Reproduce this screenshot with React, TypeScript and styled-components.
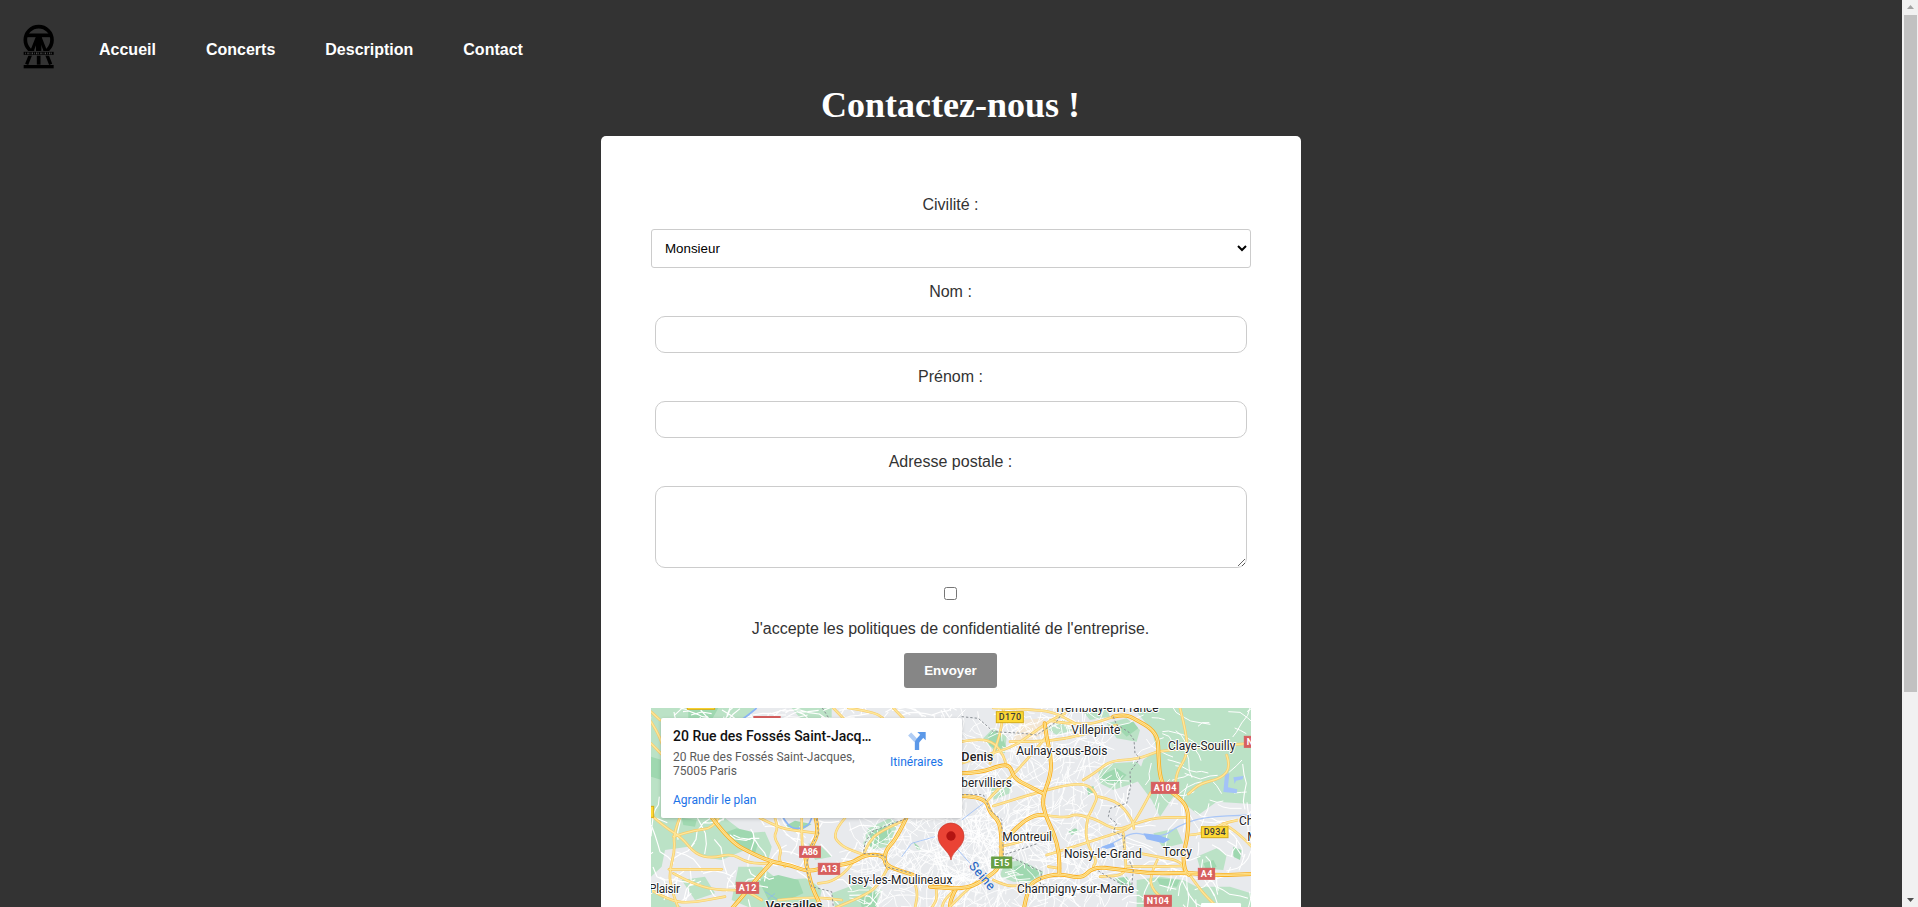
import React from "react";
import styled, { createGlobalStyle } from "styled-components";

const GlobalStyle = createGlobalStyle`
  html, body { margin: 0; padding: 0; height: 100%; overflow: hidden; background: #333; }
  *, *::before, *::after { box-sizing: border-box; }
`;

const sans = `"Liberation Sans", Arial, sans-serif`;

const Window = styled.div`
  display: flex;
  height: 100vh;
  overflow: hidden;
  background: #333;
  font-family: ${sans};
`;

const Page = styled.div`
  flex: 1;
  min-width: 0;
  overflow: hidden;
`;

const Nav = styled.nav`
  display: flex;
  align-items: center;
  height: 84px;
  padding: 16px 0 0 23px;
`;

const Brand = styled.a`
  display: flex;
  width: 38px;
  margin-right: 38px;
  margin-top: -6px;
`;

const Menu = styled.div`
  display: flex;
  gap: 50px;
`;

const MenuLink = styled.a`
  color: #fff;
  font-size: 16px;
  line-height: 18px;
  font-weight: bold;
  text-decoration: none;
`;

const Title = styled.h1`
  margin: 0 1px 0 0;
  height: 52px;
  line-height: 42px;
  font-family: "Liberation Serif", "Times New Roman", serif;
  font-size: 36px;
  color: #fff;
  text-align: center;
`;

const Card = styled.form`
  display: flex;
  flex-direction: column;
  align-items: center;
  width: 700px;
  height: 1000px;
  margin: 0 auto;
  padding: 60px 50px 0;
  background: #fff;
  border-radius: 5px;
  color: #333;
`;

const Label = styled.label`
  flex: none;
  font-size: 16px;
  line-height: 18px;
  margin: 0 1px 15px 0;
`;

const Select = styled.select`
  flex: none;
  width: 600px;
  height: 39px;
  margin-bottom: 15px;
  padding: 10px 10px 10px 9px;
  border: 1px solid #ccc;
  border-radius: 3px;
  background: #fff;
  color: #000;
  font: 13.333px ${sans};
`;

const Input = styled.input`
  flex: none;
  width: 592px;
  height: 37px;
  margin-bottom: 15px;
  border: 1px solid #ccc;
  border-radius: 10px;
  background: #fff;
`;

const TextArea = styled.textarea`
  flex: none;
  width: 592px;
  height: 82px;
  margin-bottom: 19px;
  border: 1px solid #ccc;
  border-radius: 10px;
  background: #fff;
`;

const Checkbox = styled.input`
  flex: none;
  width: 13px;
  height: 13px;
  margin: 0 1px 20px 0;
`;

const Submit = styled.button`
  flex: none;
  width: 93px;
  height: 35px;
  margin: 0 1px 20px 0;
  border: 0;
  border-radius: 3px;
  background: #868686;
  color: #fff;
  font: bold 13.333px ${sans};
`;

const MapFrame = styled.div`
  position: relative;
  flex: none;
  width: 600px;
  height: 450px;
  overflow: hidden;
  background: #e8eaed;
  font-family: Roboto, sans-serif;
`;

const PlaceCard = styled.div`
  position: absolute;
  top: 10px;
  left: 10px;
  display: flex;
  justify-content: space-between;
  width: 301px;
  height: 100px;
  padding: 9px 19px 0 12px;
  border-radius: 2px;
  background: #fff;
  box-shadow: 0 1px 4px -1px rgba(0, 0, 0, 0.3);
`;

const PlaceName = styled.div`
  font-size: 14px;
  line-height: 18px;
  font-weight: 500;
  color: #111;
  margin-bottom: 5px;
  white-space: nowrap;
`;

const PlaceAddress = styled.div`
  width: 200px;
  font-size: 12px;
  line-height: 14px;
  color: #5b5b5b;
`;

const MapLink = styled.a`
  display: block;
  font-size: 12px;
  line-height: 14px;
  color: #1a73e8;
`;

const Larger = styled(MapLink)`
  margin-top: 15px;
`;

const Directions = styled.div`
  display: flex;
  flex-direction: column;
  align-items: center;
  padding-top: 5px;
  gap: 5px;
`;

const ScrollTrack = styled.aside`
  display: flex;
  flex-direction: column;
  align-items: center;
  width: 16px;
  background: #f1f1f1;
`;

const ScrollThumb = styled.div`
  width: 13px;
  height: 677px;
  margin-left: 1px;
  background: #c1c1c1;
`;

const ScrollArrow = styled.svg<{ $end?: boolean }>`
  display: block;
  width: 16px;
  height: 15px;
  margin-top: ${(p) => (p.$end ? "auto" : "0")};
`;

const Logo = () => (
  <svg width="32" height="46" viewBox="1 0 96 138" fill="none" stroke="#000">
    <circle cx="48" cy="48" r="40" strokeWidth="11" />
    <path d="M13 34H83" strokeWidth="11" />
    <path d="M48 34V122" strokeWidth="11" />
    <path d="M45 38L12 121M51 38L84 121" strokeWidth="10" />
    <path d="M40 40L48 30L56 40V84H40Z" fill="#000" stroke="none" />
    <path d="M5 88H91" stroke="#333" strokeWidth="14" />
    <path d="M3 88H93" strokeWidth="9" />
    <path d="M8 88H90" stroke="#4a4a4a" strokeWidth="5" strokeDasharray="2 4 4 3" />
    <path d="M3 128H93" strokeWidth="10" />
  </svg>
);

const seeded = (seed: number) => () => {
  seed = (seed * 16807) % 2147483647;
  return seed / 2147483647;
};

// Short jittered segments that fan out into a street mesh, denser near the centre.
const streets = (seed: number, count: number, x0: number, y0: number, w: number, h: number) => {
  const r = seeded(seed);
  let d = "";
  for (let i = 0; i < count; i++) {
    let x = x0 + r() * w;
    let y = y0 + r() * h;
    let a = r() * Math.PI * 2;
    d += `M${x.toFixed(0)} ${y.toFixed(0)}`;
    const n = 2 + Math.floor(r() * 4);
    for (let k = 0; k < n; k++) {
      a += (r() - 0.5) * 1.1;
      x += Math.cos(a) * (14 + r() * 22);
      y += Math.sin(a) * (14 + r() * 22);
      d += `L${x.toFixed(0)} ${y.toFixed(0)}`;
    }
  }
  return d;
};

type Pt = [number, number];
const smooth = (s: string) => {
  const p = s.split(" ").map((q) => q.split(",").map(Number) as Pt);
  let d = `M${p[0]}`;
  for (let i = 1; i < p.length - 1; i++) {
    const mx = (p[i][0] + p[i + 1][0]) / 2;
    const my = (p[i][1] + p[i + 1][1]) / 2;
    d += `Q${p[i]} ${mx},${my}`;
  }
  return d + `L${p[p.length - 1]}`;
};

const eastMajor = [
  "490,50 525,42 560,60 604,86 624,116 625,160 629,225 642,262 682,288 710,318 716,360 711,420 699,465 704,510 716,524",
  "35,220 95,217 150,196 180,196 192,236 240,260 278,280",
  "284,70 289,110 303,170 303,225 276,295 285,345 312,400 328,460 328,522",
  "35,288 105,290 120,340 150,365 156,440 152,500 110,535 50,568 -60,560",
  "222,625 234,560 265,535 328,520 395,537 430,500 500,507 600,521 715,518 800,526 905,522",
  "165,420 210,370 255,345 285,345",
];
const eastMinor = [
  "35,190 110,165 190,140 240,105 300,62 345,40",
  "130,24 230,28 310,35 370,68 385,74",
  "300,62 400,80 490,50",
  "400,240 440,215 480,182 560,178 622,155",
  "622,155 700,145 770,140 900,130",
  "130,318 250,280 400,243 445,285 430,320 415,350",
  "285,345 345,355 375,342 410,350 440,360 500,392 550,372 620,352 710,352",
  "602,278 575,330 540,385 490,402 420,425 340,450 290,465",
  "690,24 712,110 710,170 680,215 674,270",
  "830,165 842,200 815,235 750,250 715,282",
  "500,75 400,105 290,125 180,125",
  "110,305 140,270 190,225 290,110",
  "570,460 620,470 690,482 702,510",
  "622,480 597,530 610,575 655,605",
  "716,520 750,570 795,615",
  "718,405 760,402 820,370 865,360",
  "820,370 860,395 905,440",
  "445,290 500,300 545,355 552,385",
  "415,350 405,390 415,440 440,480 430,500",
  "520,400 525,460 530,525 450,530",
  "150,440 220,425 270,400 310,405",
  "130,540 170,560 215,555 270,560",
  "35,125 90,115 135,130 160,165 170,200",
  "160,30 155,90 130,160 120,190",
  "0,620 40,580 80,545",
  "530,500 600,500 700,498",
  "330,505 295,500",
];
const westMajor = [
  "202,354 255,425 330,465 385,487 435,495 490,516 545,500 620,490 660,464 715,465 725,500 800,522 870,552 932,568",
  "784,354 755,415 722,450 718,485 730,503",
  "380,487 340,530 300,580 262,624",
  "512,354 522,395 500,440 480,480 490,515 500,560 530,624",
  "932,568 916,600 915,624",
];
const westMinor = [
  "18,345 60,382 110,412 150,462 200,475 260,460 310,490 380,490",
  "104,354 85,400 90,450 72,520 80,570 100,624",
  "72,508 130,508 230,508",
  "220,354 205,385 150,390 85,410",
  "390,354 400,385 385,410 410,450 400,480 420,500",
  "345,354 400,382 440,390 520,400",
  "600,354 560,400 590,440 650,462",
  "715,465 640,460 610,510 560,545 520,550",
  "780,360 700,395 670,430 655,465",
  "85,520 140,550 210,570 300,570 350,600",
  "18,570 70,600 130,610 240,590",
  "730,500 700,560 650,590 570,624",
  "800,522 820,570 810,624",
  "870,552 880,590 860,624",
  "932,568 900,595 890,624",
  "18,65 50,115 60,180",
  "18,130 52,165",
  "400,600 500,590 590,600",
  "565,24 600,60",
  "610,24 690,36 720,60",
  "745,24 780,60",
  "18,35 45,60",
  "470,354 470,440 480,480",
];

const westGreen = [
  "18,24 330,24 300,60 60,60 60,354 240,354 300,400 360,395 380,440 370,480 300,450 230,480 170,470 130,440 60,450 50,500 18,530",
  "18,560 60,590 110,621 18,621",
  "280,500 350,500 400,540 490,535 530,570 520,621 310,621 260,600",
  "670,385 735,354 760,370 730,440 670,450 655,430",
  "490,430 530,440 560,470 510,480",
  "110,540 180,530 210,580 150,600",
  "440,24 560,24 560,60 470,60",
  "560,580 640,550 710,570 690,621 570,621",
];
const westForest = [
  "235,400 275,385 320,395 338,435 330,460 280,440",
  "340,540 400,525 460,540 475,580 430,600 370,600",
  "18,170 50,180 50,240 18,230",
  "675,395 725,370 740,395 715,430 672,440",
  "130,30 220,24 200,60 130,60",
  "420,378 450,362 500,372 455,400",
  "805,425 822,440 828,452 815,446",
  "110,354 155,360 150,380 115,375",
  "640,585 690,575 700,621 650,621",
];
const eastGreen = [
  "550,24 903,24 903,312 800,305 745,345 715,320 670,290 630,350 605,300 560,240 580,180 620,150 605,90",
  "445,215 490,190 560,185 600,230 550,250 490,270 450,250",
  "100,115 130,85 170,110 165,160 130,150",
  "160,490 210,480 280,515 265,550 190,545 150,530",
  "470,70 530,55 570,90 560,125 500,115",
  "560,540 630,530 700,540 740,560 840,560 903,580 903,621 560,621",
  "740,470 800,445 830,465 820,510 750,505",
  "395,30 470,24 480,50 420,60",
  "610,400 680,385 700,430 640,445",
  "290,85 340,60 370,90 320,105",
  "120,265 190,245 180,280 130,300",
];
const eastForest = [
  "115,105 130,92 155,105 168,140 140,150 118,135",
  "455,225 500,205 530,225 505,250 460,245",
  "190,500 235,490 270,520 240,545 200,535",
  "500,80 550,65 565,85 530,110",
  "760,490 790,480 800,500 770,512",
  "620,535 690,540 680,560 630,556",
  "355,395 375,385 390,392 365,405",
  "410,265 430,258 435,275 415,285",
  "495,535 530,530 548,560 520,565",
  "850,440 875,450 870,480 850,470",
];

const Roads = ({ lines, major }: { lines: string[]; major?: boolean }) => (
  <g fill="none" strokeLinecap="round" strokeLinejoin="round">
    {lines.map((l, i) => (
      <path key={`c${i}`} d={smooth(l)} stroke={major ? "#f9ae22" : "#f9cb68"} strokeWidth={major ? 12 : 8} />
    ))}
    {lines.map((l, i) => (
      <path key={`f${i}`} d={smooth(l)} stroke="#fde79a" strokeWidth={major ? 7 : 4} />
    ))}
    {major && lines.map((l, i) => <path key={`m${i}`} d={smooth(l)} stroke="#f9b532" strokeWidth="1.5" />)}
  </g>
);

const Areas = ({ shapes, fill }: { shapes: string[]; fill: string }) => (
  <g fill={fill}>
    {shapes.map((s, i) => (
      <polygon key={i} points={s} />
    ))}
  </g>
);

const Town = ({ x, y, w, size = 36, weight = 400, children }: {
  x: number; y: number; w: number; size?: number; weight?: number; children: string;
}) => (
  <text x={x} y={y} textLength={w} fontSize={size} fontWeight={weight} fill="#202124" stroke="#fff"
    strokeWidth="6" strokeLinejoin="round" paintOrder="stroke">{children}</text>
);

const shieldColors = {
  red: ["#d75f5f", "#d75f5f", "#fff"],
  green: ["#679f45", "#679f45", "#fff"],
  yellow: ["#fdd835", "#d6ac16", "#3c3c3c"],
};

const Shield = ({ x, y, w, tone = "red", children }: {
  x: number; y: number; w: number; tone?: keyof typeof shieldColors; children: string;
}) => {
  const [bg, edge, ink] = shieldColors[tone];
  return (
    <g>
      <rect x={x} y={y} width={w} height="33" fill={bg} stroke={edge} strokeWidth="3" />
      <text x={x + w / 2} y={y + 26} fontSize="27" fontWeight={tone === "yellow" ? 500 : 700} textAnchor="middle"
        fill={ink} textLength={w - 14}>{children}</text>
    </g>
  );
};

const dashes = { fill: "none", stroke: "#8a8f95", strokeWidth: 3, strokeDasharray: "7 6" };

const ParisMap = () => (
  <svg width="600" height="199" viewBox="0 0 1800 597" display="block">
    <rect width="1800" height="597" fill="#e8eaed" />
    <g transform="translate(-18 -24)">
      <Areas shapes={westGreen} fill="#bbe2c6" />
      <Areas shapes={westForest} fill="#9fd8b0" />
    </g>
    <g transform="translate(897 -24)">
      <Areas shapes={eastGreen} fill="#bbe2c6" />
      <Areas shapes={eastForest} fill="#9fd8b0" />
      <polygon points="215,60 280,55 285,100 220,130 180,140" fill="#f3e6d3" />
    </g>
    <g fill="none" stroke="#fff" strokeLinejoin="round">
      <path d={streets(17, 60, 0, 320, 620, 277)} strokeWidth="3.5" />
      <path d={streets(91, 260, 640, 320, 430, 277)} strokeWidth="2.6" />
      <path d={streets(53, 380, 930, 0, 470, 590)} strokeWidth="2.8" />
      <path d={streets(29, 32, 1500, 0, 300, 300)} strokeWidth="3" />
      <path d={streets(37, 60, 1390, 290, 410, 300)} strokeWidth="3.2" />
      <path d={streets(7, 50, 0, 0, 920, 30)} strokeWidth="3.5" />
    </g>
    <g transform="translate(-18 -24)">
      <g fill="none" stroke="#8ab4f8" strokeWidth="5">
        <path d={smooth("415,354 430,378 455,388 490,378 500,354")} />
        <path d={smooth("335,24 310,45 285,62")} />
        <path d="M770,470L800,430L870,410M360,575L400,600M390,580L368,598" strokeWidth="2" />
      </g>
      <Roads lines={westMinor} />
      <Roads lines={westMajor} major />
      <path d="M784 356L730 375L680 395L660 430L655 460L720 468L722 500L800 520M515 356L520 400L488 460L485 510L500 560L560 575L565 621" {...dashes} />
      <path d="M532 24L555 60" {...dashes} />
    </g>
    <g transform="translate(897 -24)">
      <g fill="none" stroke="#a9c6f7" strokeWidth="4">
        <path d={smooth("450,445 490,430 550,395 600,410 650,405 680,380 760,350 905,345")} />
        <path d={smooth("15,440 60,490")} strokeWidth="3" />
        <path d={smooth("35,360 100,310")} strokeWidth="3" />
      </g>
      <path d="M825 222L838 220L834 262L862 268L860 280L820 276ZM850 232L880 228L878 238L858 242L854 252Z" fill="#a3c3f7" />
      <path d="M580 400L625 405L660 418L640 430L590 418ZM455 440L490 428L495 440L470 447Z" fill="#92b8f7" />
      <Roads lines={eastMinor} />
      <Roads lines={eastMajor} major />
      <path d="M35 50L85 55L130 95L220 100L260 105L320 65L345 24M490 50L500 75L535 95L552 120L555 160L570 175L540 215L542 260L530 310L480 325L475 350L500 370L490 395L525 410L520 440L550 510L545 560L500 545L440 510M35 284L100 284L120 330L155 360L160 465L220 445L265 430M160 470L190 475L275 515L270 550L340 580" {...dashes} />
    </g>
    <g transform="translate(-18 -24)">
      <rect x="127" y="0" width="82" height="28" fill="#fdd835" stroke="#d6ac16" strokeWidth="3" />
      <rect x="-20" y="319" width="46" height="33" fill="#fdd835" stroke="#d6ac16" strokeWidth="3" />
      <rect x="325" y="48" width="82" height="33" fill="#d75f5f" />
      <Shield x={464} y={439} w={62}>A86</Shield>
      <Shield x={520} y={490} w={64}>A13</Shield>
      <Shield x={274} y={547} w={67}>A12</Shield>
      <Town x={12} y={579} w={93}>Plaisir</Town>
      <Town x={609} y={552} w={313}>Issy-les-Moulineaux</Town>
      <Town x={362} y={630} w={171} size={39} weight={500}>Versailles</Town>
    </g>
    <g transform="translate(897 -24)">
      <Town x={313} y={35} w={313}>Tremblay-en-France</Town>
      <Town x={364} y={102} w={147}>Villepinte</Town>
      <Town x={199} y={165} w={273}>Aulnay-sous-Bois</Town>
      <Town x={654} y={150} w={202}>Claye-Souilly</Town>
      <Town x={34} y={184} w={96} size={38} weight={500}>Denis</Town>
      <Town x={34} y={261} w={152}>bervilliers</Town>
      <Town x={157} y={423} w={149}>Montreuil</Town>
      <Town x={342} y={474} w={233}>Noisy-le-Grand</Town>
      <Town x={638} y={468} w={88}>Torcy</Town>
      <Town x={201} y={579} w={351}>Champigny-sur-Marne</Town>
      <Town x={867} y={375} w={115}>Chelles</Town>
      <Town x={892} y={423} w={105}>Meaux</Town>
      <text transform="translate(55 499) rotate(49)" fontSize="38" fill="#1760c4" stroke="#e8eaed" strokeWidth="3"
        paintOrder="stroke" textLength="98">Seine</text>
      <Shield x={139} y={35} w={81} tone="yellow">D170</Shield>
      <Shield x={754} y={380} w={80} tone="yellow">D934</Shield>
      <Shield x={604} y={247} w={82}>A104</Shield>
      <Shield x={883} y={109} w={52}>N2</Shield>
      <Shield x={745} y={505} w={49}>A4</Shield>
      <Shield x={583} y={586} w={81}>N104</Shield>
      <Shield x={125} y={471} w={60} tone="green">E15</Shield>
      <rect x="753" y="609" width="120" height="30" rx="4" fill="#fff" />
      <path d="M3 480C-1 452-36 441-36 408A39 39 0 0 1 42 408C42 441 7 452 3 480Z" fill="#ea4335" stroke="#c5362b" strokeWidth="2" />
      <circle cx="3" cy="408" r="14" fill="#b31412" />
    </g>
  </svg>
);

const DirectionsIcon = () => (
  <svg width="18" height="18" viewBox="0 0 54 54" fill="none">
    <path d="M5 6L25 27" stroke="#b0cdf5" strokeWidth="13" />
    <path d="M27 54V34Q27 28 32 23L42 12" stroke="#5b98e8" strokeWidth="13" />
    <path d="M28 0H53V25Z" fill="#5b98e8" />
  </svg>
);

const links = ["Accueil", "Concerts", "Description", "Contact"];

export default function App() {
  return (
    <>
      <GlobalStyle />
      <Window>
        <Page>
          <Nav>
            <Brand><Logo /></Brand>
            <Menu>
              {links.map((l) => (
                <MenuLink key={l}>{l}</MenuLink>
              ))}
            </Menu>
          </Nav>
          <Title>Contactez-nous !</Title>
          <Card>
            <Label>Civilité :</Label>
            <Select defaultValue="Monsieur">
              <option>Monsieur</option>
              <option>Madame</option>
            </Select>
            <Label>Nom :</Label>
            <Input type="text" />
            <Label>Prénom :</Label>
            <Input type="text" />
            <Label>Adresse postale :</Label>
            <TextArea />
            <Checkbox type="checkbox" />
            <Label>J'accepte les politiques de confidentialité de l'entreprise.</Label>
            <Submit type="button">Envoyer</Submit>
            <MapFrame>
              <ParisMap />
              <PlaceCard>
                <div>
                  <PlaceName>20 Rue des Fossés Saint-Jacq…</PlaceName>
                  <PlaceAddress>20 Rue des Fossés Saint-Jacques, 75005 Paris</PlaceAddress>
                  <Larger>Agrandir le plan</Larger>
                </div>
                <Directions>
                  <DirectionsIcon />
                  <MapLink>Itinéraires</MapLink>
                </Directions>
              </PlaceCard>
            </MapFrame>
          </Card>
        </Page>
        <ScrollTrack>
          <ScrollArrow viewBox="0 0 16 15"><path d="M8.5 5L12 9H5Z" fill="#a3a3a3" /></ScrollArrow>
          <ScrollThumb />
          <ScrollArrow $end viewBox="0 0 16 15"><path d="M5 6H12L8.5 10Z" fill="#505050" /></ScrollArrow>
        </ScrollTrack>
      </Window>
    </>
  );
}
